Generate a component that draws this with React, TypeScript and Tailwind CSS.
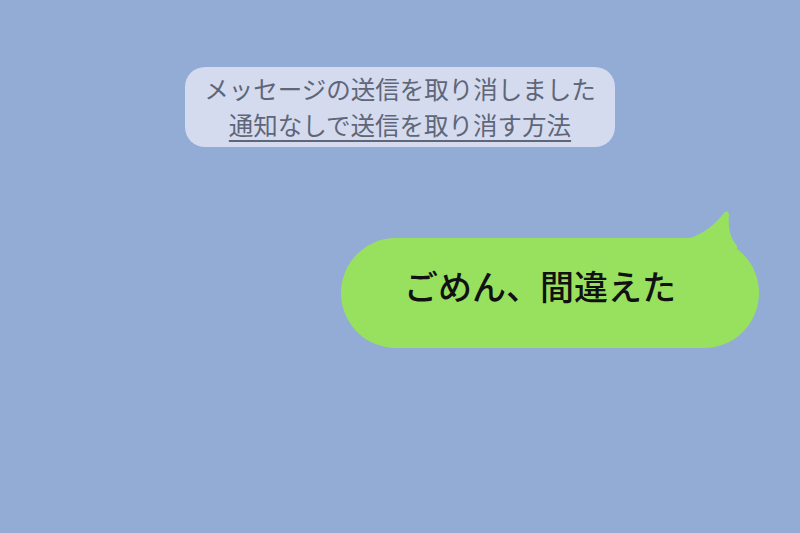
export default function App() {
  return (
    <div
      className="w-[800px] h-[533px] bg-[#93acd6] flex flex-col overflow-hidden"
      style={{ fontFamily: '"Noto Sans CJK JP", "Noto Sans", sans-serif' }}
    >
      <div className="flex justify-center pt-[67px]">
        <div className="w-[430px] h-[80px] rounded-[20px] bg-[#d4dbee] flex flex-col items-center justify-center text-[#5f6679] text-[24.5px] leading-[36px]">
          <p>メッセージの送信を取り消しました</p>
          <p className="underline underline-offset-[5px] decoration-[1.5px]">通知なしで送信を取り消す方法</p>
        </div>
      </div>
      <div className="flex justify-end pr-[41px] mt-[91px]">
        <div className="relative w-[418px] h-[110px] rounded-full bg-[#98e15f] flex items-center justify-center">
          <svg className="absolute right-[22px] -top-[28px]" width="60" height="44" viewBox="0 0 60 44">
            <path d="M0 30 C16 30 34 20 46 4 C49 0 52 1 52 5 C51 16 52 26 60 36 L60 44 L0 44 Z" fill="#98e15f" />
          </svg>
          <span className="relative text-[#111] font-medium text-[34px] leading-none -mt-[14px] mr-[20px]">ごめん、間違えた</span>
        </div>
      </div>
    </div>
  );
}
